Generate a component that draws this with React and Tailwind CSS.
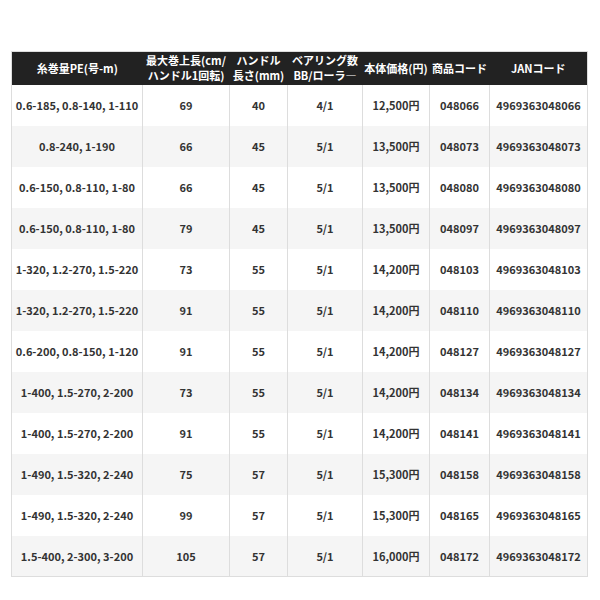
import React from 'react';

const rows = [
  ['0.6-185, 0.8-140, 1-110', '69', '40', '4/1', '12,500円', '048066', '4969363048066'],
  ['0.8-240, 1-190', '66', '45', '5/1', '13,500円', '048073', '4969363048073'],
  ['0.6-150, 0.8-110, 1-80', '66', '45', '5/1', '13,500円', '048080', '4969363048080'],
  ['0.6-150, 0.8-110, 1-80', '79', '45', '5/1', '13,500円', '048097', '4969363048097'],
  ['1-320, 1.2-270, 1.5-220', '73', '55', '5/1', '14,200円', '048103', '4969363048103'],
  ['1-320, 1.2-270, 1.5-220', '91', '55', '5/1', '14,200円', '048110', '4969363048110'],
  ['0.6-200, 0.8-150, 1-120', '91', '55', '5/1', '14,200円', '048127', '4969363048127'],
  ['1-400, 1.5-270, 2-200', '73', '55', '5/1', '14,200円', '048134', '4969363048134'],
  ['1-400, 1.5-270, 2-200', '91', '55', '5/1', '14,200円', '048141', '4969363048141'],
  ['1-490, 1.5-320, 2-240', '75', '57', '5/1', '15,300円', '048158', '4969363048158'],
  ['1-490, 1.5-320, 2-240', '99', '57', '5/1', '15,300円', '048165', '4969363048165'],
  ['1.5-400, 2-300, 3-200', '105', '57', '5/1', '16,000円', '048172', '4969363048172'],
];

const widths = ['w-[131px]', 'w-[87px]', 'w-[58px]', 'w-[75px]', 'w-[67px]', 'w-[60px]', 'w-[98px]'];

export default function App() {
  return (
    <div className="w-[600px] h-[600px] bg-white pt-[51px] pl-[11px] font-['Noto_Sans_CJK_JP',sans-serif]">
      <table className="table-fixed border-collapse w-[576px] border border-[#dddddd] text-[11px] font-bold">
        <colgroup>
          {widths.map((w, i) => <col key={i} className={w} />)}
        </colgroup>
        <thead>
          <tr className="bg-[#222222] text-white h-[33px] leading-[15px]">
            <th className="p-0 whitespace-nowrap">糸巻量PE(号-m)</th>
            <th className="p-0 whitespace-nowrap">最大巻上長(cm/<br />ハンドル1回転)</th>
            <th className="p-0 whitespace-nowrap">ハンドル<br />長さ(mm)</th>
            <th className="p-0 whitespace-nowrap">ベアリング数<br />BB/ローラ―</th>
            <th className="p-0 whitespace-nowrap">本体価格(円)</th>
            <th className="p-0 whitespace-nowrap">商品コード</th>
            <th className="p-0 whitespace-nowrap">JANコード</th>
          </tr>
        </thead>
        <tbody className="text-[#333333]">
          {rows.map((r, i) => (
            <tr key={i} className={i % 2 === 0 ? 'bg-white h-[41px]' : 'bg-[#f5f5f5] h-[41px]'}>
              {r.map((c, j) => (
                <td key={j} className="p-0 text-center whitespace-nowrap border-r border-[#dddddd]">{c}</td>
              ))}
            </tr>
          ))}
        </tbody>
      </table>
    </div>
  );
}
